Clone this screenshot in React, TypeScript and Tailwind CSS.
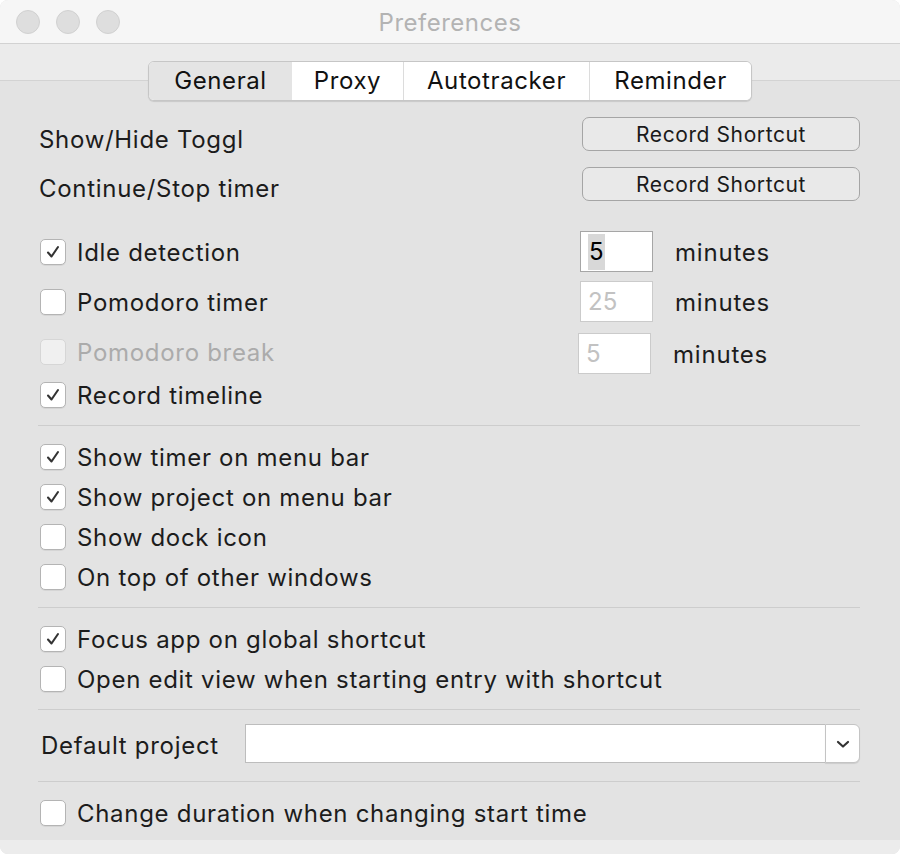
import React from 'react';

const font = { fontFamily: 'Inter, "Noto Sans", sans-serif' };

const Check: React.FC<{ checked?: boolean; disabled?: boolean }> = ({ checked, disabled }) => (
  <div
    className={`w-[26px] h-[26px] shrink-0 rounded-[5px] border flex items-center justify-center ${
      disabled ? 'bg-[#f0f0f0] border-[#d6d6d6]' : 'bg-white border-[#b4b4b4] shadow-[0_1px_0_rgba(0,0,0,0.06)]'
    }`}
  >
    {checked && (
      <svg width="16" height="16" viewBox="0 0 16 16">
        <path d="M3 8.5 L6.5 12.5 L13 3" fill="none" stroke="#333" strokeWidth="2.1" strokeLinecap="round" strokeLinejoin="round" />
      </svg>
    )}
  </div>
);

const CheckRow: React.FC<{ label: string; checked?: boolean; disabled?: boolean; className?: string }> = ({
  label,
  checked,
  disabled,
  className = '',
}) => (
  <div className={`flex items-center h-[26px] pl-[2px] ${className}`}>
    <Check checked={checked} disabled={disabled} />
    <span
      className={`ml-[11px] text-[24px] leading-[28px] tracking-[0.7px] translate-y-[1px] ${
        disabled ? 'text-[#ababab]' : 'text-[#1c1c1c]'
      }`}
    >
      {label}
    </span>
  </div>
);

const Separator: React.FC<{ className?: string }> = ({ className = '' }) => (
  <div className={`h-px bg-[#cdcdcd] ${className}`} />
);

const ShortcutButton: React.FC = () => (
  <button className="w-[278px] h-[34px] rounded-[7px] border-[1.5px] border-[#a5a5a5] bg-[#e9e9e9] text-[21px] tracking-[0.6px] text-[#1a1a1a] leading-none">
    Record Shortcut
  </button>
);

const MinutesInput: React.FC<{ value: string; disabled?: boolean; selected?: boolean }> = ({ value, disabled, selected }) => (
  <div className="flex items-center">
    <div
      className={`w-[73px] h-[41px] bg-white border flex items-center pl-[7px] text-[24px] ${
        disabled ? 'border-[#cbcbcb] text-[#c2c2c2]' : 'border-[#a6a6a6] text-black'
      }`}
    >
      <span className={selected ? 'bg-[#d8d8d8] px-[1px]' : ''}>{value}</span>
    </div>
    <span className="ml-[22px] text-[24px] tracking-[0.8px] text-[#1c1c1c] translate-y-[1px]">minutes</span>
  </div>
);

const tabs = [
  { name: 'General', w: 'w-[143px]', active: true },
  { name: 'Proxy', w: 'w-[111px]' },
  { name: 'Autotracker', w: 'w-[186px]' },
  { name: 'Reminder', w: 'w-[162px]' },
];

const App: React.FC = () => {
  return (
    <div className="w-[900px] h-[854px] bg-white" style={font}>
      <div className="w-full h-full rounded-[8px] overflow-hidden bg-[#e3e3e3] flex flex-col">
        {/* Title bar */}
        <div className="h-[44px] shrink-0 bg-[#f6f6f6] border-b border-[#d2d2d2] relative flex items-center justify-center">
          <div className="absolute left-[16px] top-[10px] flex gap-[16px]">
            <div className="w-[24px] h-[24px] rounded-full bg-[#dedede] border border-[#d1d1d1]" />
            <div className="w-[24px] h-[24px] rounded-full bg-[#dedede] border border-[#d1d1d1]" />
            <div className="w-[24px] h-[24px] rounded-full bg-[#dedede] border border-[#d1d1d1]" />
          </div>
          <span className="text-[24px] tracking-[0.5px] text-[#b3b3b3] translate-y-[1px]">Preferences</span>
        </div>

        {/* Tabs */}
        <div className="shrink-0 pt-[17px] flex justify-center bg-[linear-gradient(to_bottom,#ebebeb_36px,#d3d3d3_36px,#d3d3d3_37px,#e3e3e3_37px)]">
          <div className="flex h-[40px] rounded-[6px] border border-[#c6c6c6] bg-white overflow-hidden shadow-[0_1px_1px_rgba(0,0,0,0.12)]">
            {tabs.map((t, i) => (
              <div
                key={t.name}
                className={`${t.w} flex items-center justify-center text-[24px] tracking-[0.6px] text-[#111] ${
                  t.active ? 'bg-[#e4e4e4]' : 'bg-white'
                } ${i > 1 ? 'border-l border-[#dcdcdc]' : ''}`}
              >
                {t.name}
              </div>
            ))}
          </div>
        </div>

        {/* Content */}
        <div className="flex-1 pl-[38px] pr-[40px] flex flex-col">
          <div className="mt-[16px] h-[34px] flex items-start justify-between">
            <span className="pl-[1px] mt-[9px] text-[24px] leading-[28px] tracking-[0.7px] text-[#1c1c1c]">Show/Hide Toggl</span>
            <ShortcutButton />
          </div>
          <div className="mt-[16px] h-[34px] flex items-start justify-between">
            <span className="pl-[1px] mt-[8px] text-[24px] leading-[28px] tracking-[0.7px] text-[#1c1c1c]">Continue/Stop timer</span>
            <ShortcutButton />
          </div>

          <div className="mt-[30px] h-[41px] flex items-center">
            <CheckRow label="Idle detection" checked className="flex-1" />
            <div className="w-[280px]">
              <MinutesInput value="5" selected />
            </div>
          </div>
          <div className="mt-[9px] h-[41px] flex items-center">
            <CheckRow label="Pomodoro timer" className="flex-1" />
            <div className="w-[280px]">
              <MinutesInput value="25" disabled />
            </div>
          </div>
          <div className="mt-[11px] h-[41px] flex items-center">
            <CheckRow label="Pomodoro break" disabled className="flex-1 -mt-[3px]" />
            <div className="w-[282px]">
              <MinutesInput value="5" disabled />
            </div>
          </div>
          <CheckRow label="Record timeline" checked className="mt-[8px]" />

          <Separator className="mt-[17px]" />

          <CheckRow label="Show timer on menu bar" checked className="mt-[18px]" />
          <CheckRow label="Show project on menu bar" checked className="mt-[14px]" />
          <CheckRow label="Show dock icon" className="mt-[14px]" />
          <CheckRow label="On top of other windows" className="mt-[14px]" />

          <Separator className="mt-[17px]" />

          <CheckRow label="Focus app on global shortcut" checked className="mt-[18px]" />
          <CheckRow label="Open edit view when starting entry with shortcut" className="mt-[14px]" />

          <Separator className="mt-[17px]" />

          <div className="mt-[14px] h-[39px] flex items-center">
            <span className="pl-[3px] w-[207px] text-[24px] leading-[28px] tracking-[0.7px] text-[#1c1c1c] mt-[4px]">
              Default project
            </span>
            <div className="flex-1 h-[39px] flex">
              <div className="flex-1 bg-white border border-[#bdbdbd] border-r-0" />
              <div className="w-[35px] bg-white border border-[#c4c4c4] rounded-r-[6px] flex items-center justify-center shadow-[0_1px_1px_rgba(0,0,0,0.1)]">
                <svg width="14" height="10" viewBox="0 0 14 10">
                  <path d="M2 3 L7 7.5 L12 3" fill="none" stroke="#333" strokeWidth="2.2" strokeLinecap="round" strokeLinejoin="round" />
                </svg>
              </div>
            </div>
          </div>

          <Separator className="mt-[18px]" />

          <CheckRow label="Change duration when changing start time" className="mt-[18px]" />
        </div>

        {/* Bottom strip */}
        <div className="h-[14px] shrink-0 bg-[#ececec]" />
      </div>
    </div>
  );
};

export default App;
